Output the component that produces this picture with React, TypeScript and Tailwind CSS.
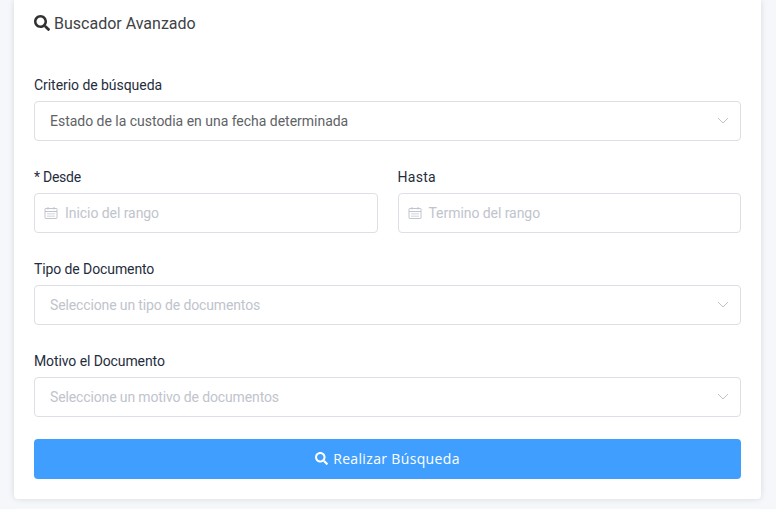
import { FaSearch } from "react-icons/fa";

function CalendarIcon() {
  return (
    <svg width="14" height="14" viewBox="0 0 14 14" fill="none" stroke="#c0c4cc" strokeWidth="1" className="shrink-0">
      <rect x="1" y="2.5" width="12" height="10" rx="0.5" />
      <path d="M1 5.5h12M4 1v2.5M10 1v2.5" />
      <path d="M3.5 7.5h7M3.5 9h7M3.5 10.5h7" strokeDasharray="1 1" />
    </svg>
  );
}

function ArrowIcon() {
  return (
    <svg width="12" height="7" viewBox="0 0 12 7" fill="none" stroke="#c0c4cc" strokeWidth="1" className="shrink-0 mb-[2px]">
      <path d="M1 1l5 5 5-5" />
    </svg>
  );
}

function SelectField({ label, value, placeholder, labelClass }: { label: string; value?: string; placeholder?: string; labelClass: string }) {
  return (
    <div>
      <div className={`h-[20px] mb-[6px] text-[14px] leading-[20px] text-[#1f2d3d] ${labelClass}`}>{label}</div>
      <div className="h-[40px] flex items-center justify-between pl-[15px] pr-[11px] bg-white border border-[#dcdfe6] rounded-[4px]">
        <span className={value ? "text-[14px] tracking-[-0.02px] text-[#606266]" : "text-[14px] tracking-[-0.13px] text-[#c0c4cc]"}>{value ?? placeholder}</span>
        <ArrowIcon />
      </div>
    </div>
  );
}

function DateField({ label, placeholder, labelClass }: { label: string; placeholder: string; labelClass: string }) {
  return (
    <div className="flex-1">
      <div className={`h-[20px] mb-[6px] text-[14px] leading-[20px] text-[#1f2d3d] ${labelClass}`}>{label}</div>
      <div className="h-[40px] flex items-center gap-[7px] pl-[9px] bg-white border border-[#dcdfe6] rounded-[4px]">
        <CalendarIcon />
        <span className="text-[14px] tracking-[-0.06px] text-[#c0c4cc]">{placeholder}</span>
      </div>
    </div>
  );
}

export default function App() {
  return (
    <div className="h-[509px] overflow-hidden bg-[#f5f7fb] px-[14px] font-['Roboto',sans-serif]">
      <div className="w-[747px] h-[499px] bg-white rounded-b-[4px] shadow-[0_0_6px_rgba(0,0,0,0.12)] px-[20px]">
        <div className="h-[47px] pt-[14px] flex items-start gap-[4px]">
          <FaSearch size={16} color="#303133" className="mt-[1px]" />
          <span className="text-[16px] leading-[20px] text-[#404246]">Buscador Avanzado</span>
        </div>
        <div className="pt-[28px] flex flex-col gap-[26px]">
          <SelectField labelClass="tracking-[-0.05px]" label="Criterio de búsqueda" value="Estado de la custodia en una fecha determinada" />
          <div className="flex gap-[20px]">
            <DateField labelClass="tracking-[-0.25px]" label="* Desde" placeholder="Inicio del rango" />
            <DateField labelClass="tracking-[0.3px]" label="Hasta" placeholder="Termino del rango" />
          </div>
          <SelectField labelClass="tracking-[-0.1px]" label="Tipo de Documento" placeholder="Seleccione un tipo de documentos" />
          <SelectField labelClass="tracking-[-0.1px]" label="Motivo el Documento" placeholder="Seleccione un motivo de documentos" />
        </div>
        <button className="mt-[22px] w-full h-[40px] flex items-center justify-center gap-[5px] pb-[1px] bg-[#409eff] rounded-[4px] text-white text-[14px] tracking-[0.35px] font-['Open_Sans',sans-serif]">
          <FaSearch size={13} color="#fff" />
          Realizar Búsqueda
        </button>
      </div>
    </div>
  );
}
